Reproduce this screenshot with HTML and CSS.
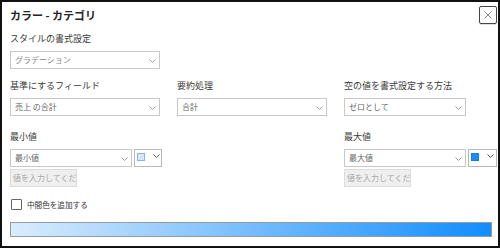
FILE: index.html
```html
<!DOCTYPE html>
<html lang="ja">
<head>
<meta charset="utf-8">
<link rel="stylesheet" href="styles.css">
</head>
<body>
<div class="dialog">
  <div class="header">
    <div class="title">カラー - カテゴリ</div>
    <div class="close"><svg width="8" height="8" viewBox="0 0 8 8"><path d="M0.5 0.5 L7.5 7.5 M7.5 0.5 L0.5 7.5" stroke="#888" stroke-width="1" fill="none"/></svg></div>
  </div>
  <div class="body">
    <div class="label">スタイルの書式設定</div>
    <div class="select w150"><span class="val light">グラデーション</span><svg class="chev" width="7" height="4" viewBox="0 0 7 4"><polyline points="0.5,0.5 3.5,3.5 6.5,0.5" stroke="#a0a0a0" fill="none"/></svg></div>

    <div class="grid3">
      <div class="field">
        <div class="label">基準にするフィールド</div>
        <div class="select"><span class="val">売上 の合計</span><svg class="chev" width="7" height="4" viewBox="0 0 7 4"><polyline points="0.5,0.5 3.5,3.5 6.5,0.5" stroke="#a0a0a0" fill="none"/></svg></div>
      </div>
      <div class="field">
        <div class="label">要約処理</div>
        <div class="select"><span class="val">合計</span><svg class="chev" width="7" height="4" viewBox="0 0 7 4"><polyline points="0.5,0.5 3.5,3.5 6.5,0.5" stroke="#a0a0a0" fill="none"/></svg></div>
      </div>
      <div class="field">
        <div class="label">空の値を書式設定する方法</div>
        <div class="select"><span class="val">ゼロとして</span><svg class="chev" width="7" height="4" viewBox="0 0 7 4"><polyline points="0.5,0.5 3.5,3.5 6.5,0.5" stroke="#a0a0a0" fill="none"/></svg></div>
      </div>
    </div>

    <div class="minmax">
      <div class="group">
        <div class="label">最小値</div>
        <div class="pickrow">
          <div class="select sm"><span class="val">最小値</span><svg class="chev" width="7" height="4" viewBox="0 0 7 4"><polyline points="0.5,0.5 3.5,3.5 6.5,0.5" stroke="#a0a0a0" fill="none"/></svg></div>
          <div class="color"><span class="swatch swatch-min"></span><svg class="cchev" width="7" height="4" viewBox="0 0 7 4"><polyline points="0.5,0.5 3.5,3.5 6.5,0.5" stroke="#555" fill="none"/></svg></div>
        </div>
        <div class="input">値を入力してくだ</div>
      </div>
      <div class="group">
        <div class="label">最大値</div>
        <div class="pickrow">
          <div class="select sm"><span class="val">最大値</span><svg class="chev" width="7" height="4" viewBox="0 0 7 4"><polyline points="0.5,0.5 3.5,3.5 6.5,0.5" stroke="#a0a0a0" fill="none"/></svg></div>
          <div class="color wide"><span class="swatch swatch-max"></span><svg class="cchev" width="7" height="4" viewBox="0 0 7 4"><polyline points="0.5,0.5 3.5,3.5 6.5,0.5" stroke="#555" fill="none"/></svg></div>
        </div>
        <div class="input">値を入力してくだ</div>
      </div>
    </div>

    <div class="check"><span class="box"></span><span class="check-label">中間色を追加する</span></div>
    <div class="gradient"></div>
  </div>
</div>
</body>
</html>
```

FILE: styles.css
```css
html, body {
  margin: 0;
  padding: 0;
  background: #fff;
}
body {
  font-family: "Noto Sans CJK JP", "Noto Sans", sans-serif;
  color: #333;
}
.dialog {
  width: 500px;
  height: 248px;
  box-sizing: border-box;
  border: 2px solid #111;
  background: #fff;
  overflow: hidden;
}
.header {
  height: 26px;
  display: flex;
  align-items: center;
  justify-content: space-between;
  padding: 0 1px 0 8px;
}
.title {
  font-size: 11px;
  font-weight: bold;
  color: #252525;
  line-height: 14px;
}
.close {
  width: 18px;
  height: 18px;
  box-sizing: border-box;
  border: 1px solid #444;
  border-radius: 2px;
  display: flex;
  align-items: center;
  justify-content: center;
  box-shadow: 0 1px 1px rgba(0,0,0,0.15);
}
.body {
  padding: 4px 8px 0 8px;
}
.label {
  font-size: 9px;
  line-height: 14px;
  height: 14px;
  margin-bottom: 5px;
  color: #3a3a3a;
  white-space: nowrap;
}
.select {
  height: 18px;
  box-sizing: border-box;
  border: 1px solid #c8c8c8;
  background: #fff;
  display: flex;
  align-items: center;
  justify-content: space-between;
  padding: 0 3px 0 4px;
}
.w150 { width: 150px; }
.val {
  font-size: 8px;
  line-height: 10px;
  color: #666;
  white-space: nowrap;
}
.val.light { color: #888; }
.chev { display: block; margin-top: 1px; }
.grid3 {
  margin-top: 10px;
  display: grid;
  grid-template-columns: 150px 150px 122px;
  column-gap: 17px;
}
.minmax {
  margin-top: 14px;
  display: grid;
  grid-template-columns: 334px 153px;
}
.pickrow {
  display: flex;
  gap: 2px;
}
.select.sm { width: 122px; }
.color {
  width: 28px;
  height: 18px;
  box-sizing: border-box;
  border: 1px solid #b8b8b8;
  display: flex;
  align-items: flex-start;
  padding: 3px 0 0 2px;
  gap: 8px;
}
.color.wide { width: 29px; }
.swatch {
  width: 8px;
  height: 8px;
  box-sizing: border-box;
  display: block;
}
.swatch-min {
  background: #d4e8fd;
  border: 1px solid #8fb3d9;
}
.swatch-max {
  background: #1a8cff;
  border: 1px solid #1a7de0;
}
.cchev { display: block; margin-top: 1px; }
.input {
  margin-top: 2px;
  width: 67px;
  height: 18px;
  box-sizing: border-box;
  border: 1px solid #dcdcdc;
  background: #efefef;
  color: #a8a8a8;
  font-size: 8px;
  line-height: 16px;
  padding-left: 2px;
  white-space: nowrap;
  overflow: hidden;
}
.check {
  margin-top: 11px;
  height: 13px;
  display: flex;
  align-items: center;
  gap: 5px;
  padding-left: 1px;
}
.box {
  width: 11px;
  height: 11px;
  box-sizing: border-box;
  border: 1px solid #666;
  border-radius: 1px;
  background: #fff;
  display: block;
}
.check-label {
  font-size: 7.6px;
  line-height: 13px;
  color: #333;
}
.gradient {
  margin-top: 11px;
  width: 482px;
  height: 15px;
  box-sizing: border-box;
  border: 1px solid #9a9a9a;
  background: linear-gradient(to right, #d9ecfe, #118dff);
}
```
